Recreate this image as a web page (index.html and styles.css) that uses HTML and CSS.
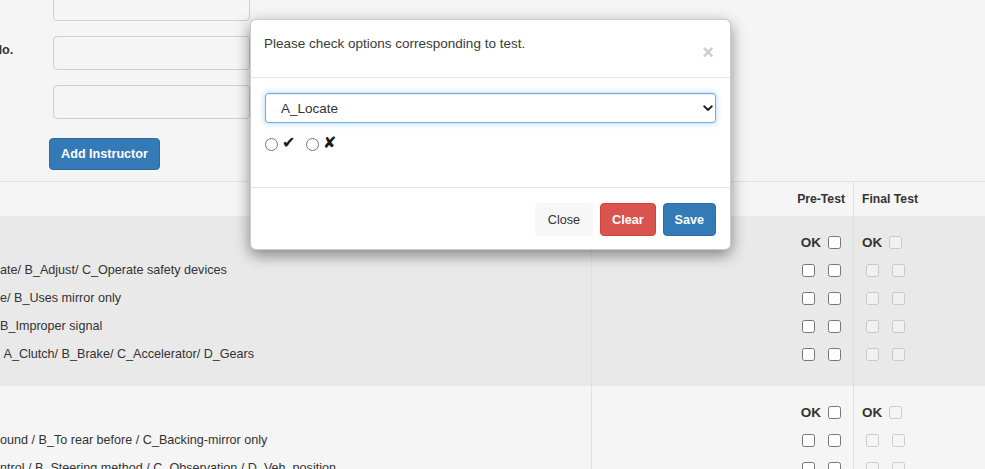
FILE: index.html
```html
<!DOCTYPE html>
<html lang="en">
<head>
<meta charset="utf-8">
<title>Instructor test</title>
<link rel="stylesheet" href="styles.css">
</head>
<body>
<div class="page">
  <section class="form">
    <div class="form-row"><span class="form-label"></span><input class="field" type="text"></div>
    <div class="form-row"><span class="form-label">No.</span><input class="field" type="text"></div>
    <div class="form-row"><span class="form-label"></span><input class="field" type="text"></div>
    <div class="form-actions"><button class="btn btn-primary btn-add">Add Instructor</button></div>
  </section>

  <div class="grid thead">
    <div class="cell c1"></div>
    <div class="cell c2 hd">Pre-Test</div>
    <div class="cell c3 hd">Final Test</div>
  </div>

  <div class="grid group group-dark">
    <div class="cell c1">
      <div class="ok-line"></div>
      <div class="line">ate/ B_Adjust/ C_Operate safety devices</div>
      <div class="line">e/ B_Uses mirror only</div>
      <div class="line">B_Improper signal</div>
      <div class="line">&nbsp;A_Clutch/ B_Brake/ C_Accelerator/ D_Gears</div>
    </div>
    <div class="cell c2">
      <div class="ok-line"><span class="ok">OK</span><input type="checkbox"></div>
      <div class="line boxes"><input type="checkbox"><input type="checkbox"></div>
      <div class="line boxes"><input type="checkbox"><input type="checkbox"></div>
      <div class="line boxes"><input type="checkbox"><input type="checkbox"></div>
      <div class="line boxes"><input type="checkbox"><input type="checkbox"></div>
    </div>
    <div class="cell c3">
      <div class="ok-line"><span class="ok">OK</span><input type="checkbox" disabled></div>
      <div class="line boxes"><input type="checkbox" disabled><input type="checkbox" disabled></div>
      <div class="line boxes"><input type="checkbox" disabled><input type="checkbox" disabled></div>
      <div class="line boxes"><input type="checkbox" disabled><input type="checkbox" disabled></div>
      <div class="line boxes"><input type="checkbox" disabled><input type="checkbox" disabled></div>
    </div>
  </div>

  <div class="grid group">
    <div class="cell c1">
      <div class="ok-line"></div>
      <div class="line">ound / B_To rear before / C_Backing-mirror only</div>
      <div class="line">ntrol / B_Steering method / C_Observation / D_Veh. position</div>
    </div>
    <div class="cell c2">
      <div class="ok-line"><span class="ok">OK</span><input type="checkbox"></div>
      <div class="line boxes"><input type="checkbox"><input type="checkbox"></div>
      <div class="line boxes"><input type="checkbox"><input type="checkbox"></div>
    </div>
    <div class="cell c3">
      <div class="ok-line"><span class="ok">OK</span><input type="checkbox" disabled></div>
      <div class="line boxes"><input type="checkbox" disabled><input type="checkbox" disabled></div>
      <div class="line boxes"><input type="checkbox" disabled><input type="checkbox" disabled></div>
    </div>
  </div>
</div>

<div class="modal">
  <div class="modal-header">
    <p class="modal-title">Please check options corresponding to test.</p>
    <button class="close" type="button">&times;</button>
  </div>
  <div class="modal-body">
    <div class="select-wrap">
      <select class="select"><option>A_Locate</option><option>B_Adjust</option><option>C_Operate safety devices</option></select>
      <svg class="chev" width="10" height="7" viewBox="0 0 10 7"><polyline points="1.2,1.3 5,5 8.8,1.3" fill="none" stroke="#222" stroke-width="1.9" stroke-linecap="round" stroke-linejoin="round"/></svg>
    </div>
    <div class="choices">
      <label class="choice"><input type="radio" name="res"><span class="mark">&#10004;</span></label>
      <label class="choice"><input type="radio" name="res"><span class="mark">&#10008;</span></label>
    </div>
  </div>
  <div class="modal-footer">
    <button class="btn btn-default" type="button">Close</button>
    <button class="btn btn-danger" type="button">Clear</button>
    <button class="btn btn-primary" type="button">Save</button>
  </div>
</div>
</body>
</html>
```

FILE: styles.css
```css
html, body {
  margin: 0;
  padding: 0;
}

body {
  width: 985px;
  height: 469px;
  overflow: hidden;
  position: relative;
  background: #f5f5f5;
  font-family: "Liberation Sans", Arial, sans-serif;
  font-size: 12.6px;
  color: #333;
}

.page {
  margin-top: -13px;
}

/* ---------- form ---------- */
.form-row {
  display: grid;
  grid-template-columns: 53px 197px;
  height: 34px;
  margin-bottom: 15px;
  align-items: center;
}

.form-label {
  font-weight: bold;
  margin-left: -7px;
  margin-top: -6px;
  white-space: nowrap;
}

.field {
  width: 197px;
  height: 34px;
  box-sizing: border-box;
  border: 1px solid #cfcfcf;
  border-radius: 4px;
  background: transparent;
  margin: 0;
}

.form-actions {
  margin-top: 19px;
  margin-bottom: 11px;
  padding-left: 49px;
}

/* ---------- buttons ---------- */
.btn {
  font-family: "Liberation Sans", Arial, sans-serif;
  font-size: 12.6px;
  height: 33px;
  padding: 0 11px;
  border: 1px solid transparent;
  border-radius: 4px;
  cursor: pointer;
  margin: 0;
}

.btn-primary {
  background: #337ab7;
  border-color: #2e6da4;
  color: #fff;
  font-weight: bold;
}

.btn-danger {
  background: #d9534f;
  border-color: #d43f3a;
  color: #fff;
  font-weight: bold;
}

.btn-default {
  background: #f7f7f7;
  color: #333;
  border-color: transparent;
  padding: 0 12px;
}

.btn-add {
  width: 111px;
  height: 32px;
  padding: 0;
}

/* ---------- table ---------- */
.grid {
  display: grid;
  grid-template-columns: 591px 262px 132px;
}

.thead {
  border-top: 1px solid #e2e2e2;
  height: 34px;
}

.thead .cell {
  display: flex;
  align-items: center;
}

.hd {
  font-weight: bold;
  font-size: 12.2px;
}

.c2 {
  border-left: 1px solid #e0e0e0;
  justify-content: flex-end;
  padding-right: 8px;
}

.c3 {
  border-left: 1px solid #e0e0e0;
  padding-left: 8px;
}

.group {
  padding-top: 13px;
  padding-bottom: 18px;
}

.group .cell {
  display: flex;
  flex-direction: column;
}

.group .c2 {
  align-items: flex-end;
  padding-right: 12px;
  margin-top: -13px;
  margin-bottom: -18px;
  padding-top: 13px;
  padding-bottom: 18px;
}

.group .c3 {
  align-items: flex-start;
  margin-top: -13px;
  margin-bottom: -18px;
  padding-top: 13px;
  padding-bottom: 18px;
}

.group-dark {
  background: #e9e9e9;
}

.ok-line {
  height: 27px;
  display: flex;
  align-items: center;
  gap: 7px;
}

.line {
  height: 28px;
  line-height: 28px;
  white-space: nowrap;
}

.boxes {
  display: flex;
  align-items: center;
  gap: 13px;
}

.c3 .boxes {
  padding-left: 4px;
}

.ok {
  font-weight: bold;
  font-size: 13.5px;
}

input[type="checkbox"] {
  width: 13px;
  height: 13px;
  margin: 0;
}

/* ---------- modal ---------- */
.modal {
  position: absolute;
  left: 250px;
  top: 19px;
  width: 481px;
  box-sizing: border-box;
  background: #fff;
  border: 1px solid rgba(0, 0, 0, 0.2);
  border-radius: 6px;
  box-shadow: 0 5px 15px rgba(0, 0, 0, 0.45);
}

.modal-header {
  height: 58px;
  box-sizing: border-box;
  border-bottom: 1px solid #e5e5e5;
  display: flex;
  justify-content: space-between;
  align-items: flex-start;
  padding: 14px 16px 0 13px;
}

.modal-title {
  margin: 0;
  font-size: 13.5px;
  line-height: 20px;
  color: #3a3a3a;
}

.close {
  margin: 8px 0 0 0;
  padding: 0;
  border: 0;
  background: transparent;
  font-family: "Liberation Sans", Arial, sans-serif;
  font-size: 20px;
  font-weight: bold;
  line-height: 1;
  color: #000;
  opacity: 0.2;
}

.modal-body {
  height: 109px;
  box-sizing: border-box;
  padding: 15px 14px 0 14px;
}

.select-wrap {
  position: relative;
}

.select {
  display: block;
  width: 100%;
  height: 30px;
  box-sizing: border-box;
  margin: 0;
  padding: 0 30px 0 15px;
  appearance: none;
  -webkit-appearance: none;
  background: #fff;
  border: 1px solid #66afe9;
  border-radius: 3px;
  box-shadow: inset 0 1px 1px rgba(0, 0, 0, 0.075), 0 0 6px rgba(102, 175, 233, 0.55);
  font-family: "Liberation Sans", Arial, sans-serif;
  font-size: 13.5px;
  color: #333;
  outline: none;
}

.chev {
  position: absolute;
  right: 3px;
  top: 12px;
  pointer-events: none;
}

.choices {
  display: flex;
  gap: 14px;
  margin-top: 14px;
}

.choice {
  display: flex;
  align-items: center;
  gap: 4px;
}

.choice input[type="radio"] {
  width: 13px;
  height: 13px;
  margin: 0;
}

.mark {
  display: block;
  width: 10px;
  font-family: "DejaVu Sans", sans-serif;
  font-size: 16px;
  line-height: 16px;
  color: #1a1a1a;
  margin-top: -2px;
}

.modal-footer {
  border-top: 1px solid #e5e5e5;
  display: flex;
  justify-content: flex-end;
  gap: 7px;
  padding: 15px 14px 13px 14px;
}
```
